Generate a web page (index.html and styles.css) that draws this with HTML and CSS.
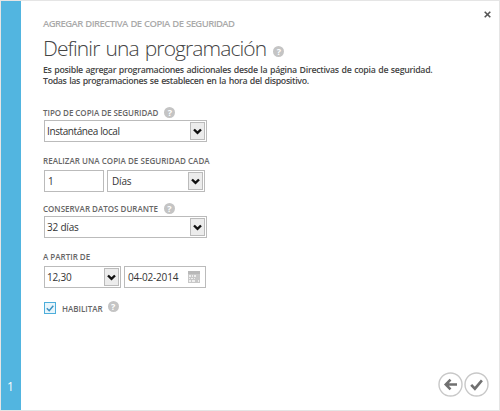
FILE: index.html
```
<!DOCTYPE html>
<html lang="es">
<head>
<meta charset="utf-8">
<title>Definir una programación</title>
<link rel="stylesheet" href="styles.css">
</head>
<body>
<div class="dialog">
  <aside class="rail"><span>1</span></aside>
  <button class="close" aria-label="Cerrar"><svg width="7" height="7" viewBox="0 0 7 7"><path d="M.7.7l5.6 5.6M6.3.7L.7 6.3"/></svg></button>
  <main class="content">
    <div class="eyebrow"><span>AGREGAR DIRECTIVA DE COPIA DE SEGURIDAD</span></div>
    <h1><span>Definir una programación</span><i class="help">?</i></h1>
    <div class="intro"><p class="intro-a">Es posible agregar programaciones adicionales desde la página Directivas de copia de seguridad.</p><p class="intro-b">Todas las programaciones se establecen en la hora del dispositivo.</p></div>

    <div class="field">
      <div class="label"><span class="l-type">TIPO DE COPIA DE SEGURIDAD</span><i class="help">?</i></div>
      <div class="row"><div class="box wide"><span class="v-type">Instantánea local</span><b class="arrow"><svg width="9" height="7" viewBox="0 0 9 7"><path d="M1 1.5l3.5 3.4L8 1.5"/></svg></b></div></div>
    </div>
    <div class="field paired">
      <div class="label"><span class="l-every">REALIZAR UNA COPIA DE SEGURIDAD CADA</span></div>
      <div class="row"><div class="box count"><span>1</span></div><div class="box unit"><span class="v-unit">Días</span><b class="arrow"><svg width="9" height="7" viewBox="0 0 9 7"><path d="M1 1.5l3.5 3.4L8 1.5"/></svg></b></div></div>
    </div>
    <div class="field">
      <div class="label"><span class="l-keep">CONSERVAR DATOS DURANTE</span><i class="help">?</i></div>
      <div class="row"><div class="box wide"><span class="v-keep">32 días</span><b class="arrow"><svg width="9" height="7" viewBox="0 0 9 7"><path d="M1 1.5l3.5 3.4L8 1.5"/></svg></b></div></div>
    </div>
    <div class="field paired">
      <div class="label"><span class="l-from">A PARTIR DE</span></div>
      <div class="row"><div class="box time"><span class="v-time">12,30</span><b class="arrow"><svg width="9" height="7" viewBox="0 0 9 7"><path d="M1 1.5l3.5 3.4L8 1.5"/></svg></b></div><div class="box date"><span class="v-date">04-02-2014</span><svg class="calendar" width="12" height="12" viewBox="0 0 12 12"><path fill="#c8c8c8" d="M0 0h12v12H0z"/><path fill="#b8b8b8" d="M0 0h12v3H0z"/><path fill="#eee" d="M1 4h2v2H1zM4 4h1v2H4zM6 4h2v2H6zM1 7h1v1H1zM3 7h2v1H3zM6 7h1v1H6zM1 9h2v2H1zM4 9h3v2H4zM10 9h1v2h-1z"/></svg></div></div>
    </div>
    <div class="enable">
      <span class="checkbox"><svg width="8" height="7" viewBox="0 0 8 7"><path d="M.8 3.2l2.4 2.5L7.3.8"/></svg></span><span class="l-enable">HABILITAR</span><i class="help">?</i>
    </div>
  </main>
  <nav class="actions">
    <button aria-label="Atrás"><svg width="25" height="25" viewBox="0 0 25 25"><circle cx="12.5" cy="12.5" r="11.5"/><path d="M7.5 12.5H19M12.5 7.7l-4.7 4.8 4.7 4.8"/></svg></button>
    <button aria-label="Aceptar"><svg width="25" height="25" viewBox="0 0 25 25"><circle cx="12.5" cy="12.5" r="11.5"/><path d="M7.2 12.8l3.7 3.9 7-8.4"/></svg></button>
  </nav>
</div>
</body>
</html>
```

FILE: styles.css
```
* { box-sizing: border-box; }
body { margin: 0; background: #fff; color: #444; font: 10px "Open Sans", "Noto Sans", sans-serif; }
button { padding: 0; border: 0; background: none; }
svg { display: block; fill: none; }
.dialog { position: relative; display: flex; width: 500px; height: 411px; border: 1px solid #e5e5e5; background: #fff; }
.rail { display: flex; align-items: flex-end; width: 20px; padding: 0 0 15px 6px; background: #52b5e0; color: #fff; font-size: 12px; line-height: 16px; }
.close { position: absolute; top: 10px; right: 8px; }
.close path { stroke: #555; stroke-width: 1.6; }
.content { padding: 15px 0 0 23px; white-space: nowrap; }
.eyebrow { height: 16px; margin-left: -1px; color: #aaa; font-size: 9.5px; font-weight: 600; line-height: 16px; letter-spacing: -.58px; word-spacing: .7px; }
h1 { display: flex; align-items: center; height: 28px; margin: 2px 0 0 -1px; color: #444; font-size: 21px; font-weight: 300; line-height: 28px; letter-spacing: -.9px; word-spacing: 1.5px; }
h1 .help { margin: 6px 0 0 7px; }
.help { display: inline-block; flex: none; width: 11px; height: 11px; border-radius: 50%; background: #c4c4c4; color: #fff; font: bold 9px/11px "Open Sans", sans-serif; letter-spacing: 0; text-align: center; }
.intro { margin: 3px 0 18px -1px; height: 22px; font-size: 8.8px; font-weight: 600; line-height: 11px; }
.intro p { margin: 0; }
.intro-a { letter-spacing: -.29px; word-spacing: .7px; }
.intro-b { letter-spacing: -.33px; word-spacing: .7px; }
.field { height: 48px; }
.label { display: flex; align-items: center; height: 15px; margin-left: -1px; color: #666; font-size: 8px; font-weight: 600; line-height: 15px; }
.label .help { margin-left: 6px; }
.l-type { letter-spacing: -.04px; }
.l-every { letter-spacing: .03px; }
.row { display: flex; gap: 3px; }
.paired .row { margin-top: 2px; }
.box { display: flex; align-items: center; justify-content: space-between; height: 22px; padding: 0 1px 0 3px; border: 1px solid #bbb; color: #333; font-size: 10px; letter-spacing: -.2px; }
.wide { width: 163px; padding-left: 2px; }
.v-type { letter-spacing: -.4px; }
.count { width: 60px; }
.unit { width: 98px; padding-left: 4px; }
.time { width: 77px; padding-left: 2px; }
.date { width: 82px; padding-right: 5px; }
.v-date { letter-spacing: -.2px; }
.arrow { display: flex; align-items: center; justify-content: center; width: 15px; height: 18px; border: 1px solid #bbb; background: #ececec; }
.arrow path { stroke: #111; stroke-width: 2.4; }
.enable { display: flex; height: 13px; margin-top: 5px; color: #666; font-size: 8px; font-weight: 600; line-height: 14px; }
.enable .help { margin: -1px 0 0 5px; }
.checkbox { display: flex; align-items: center; justify-content: center; width: 12px; height: 12px; margin-right: 6px; border: 1px solid #4daedb; background: #e8f5fb; }
.checkbox path { stroke: #3b91c2; stroke-width: 1.5; }
.actions { position: absolute; right: 10px; bottom: 13px; display: flex; gap: 1px; }
.actions circle { stroke: #c8c8c8; stroke-width: 1.4; }
.actions path { stroke: #707070; stroke-width: 2.6; }
```
